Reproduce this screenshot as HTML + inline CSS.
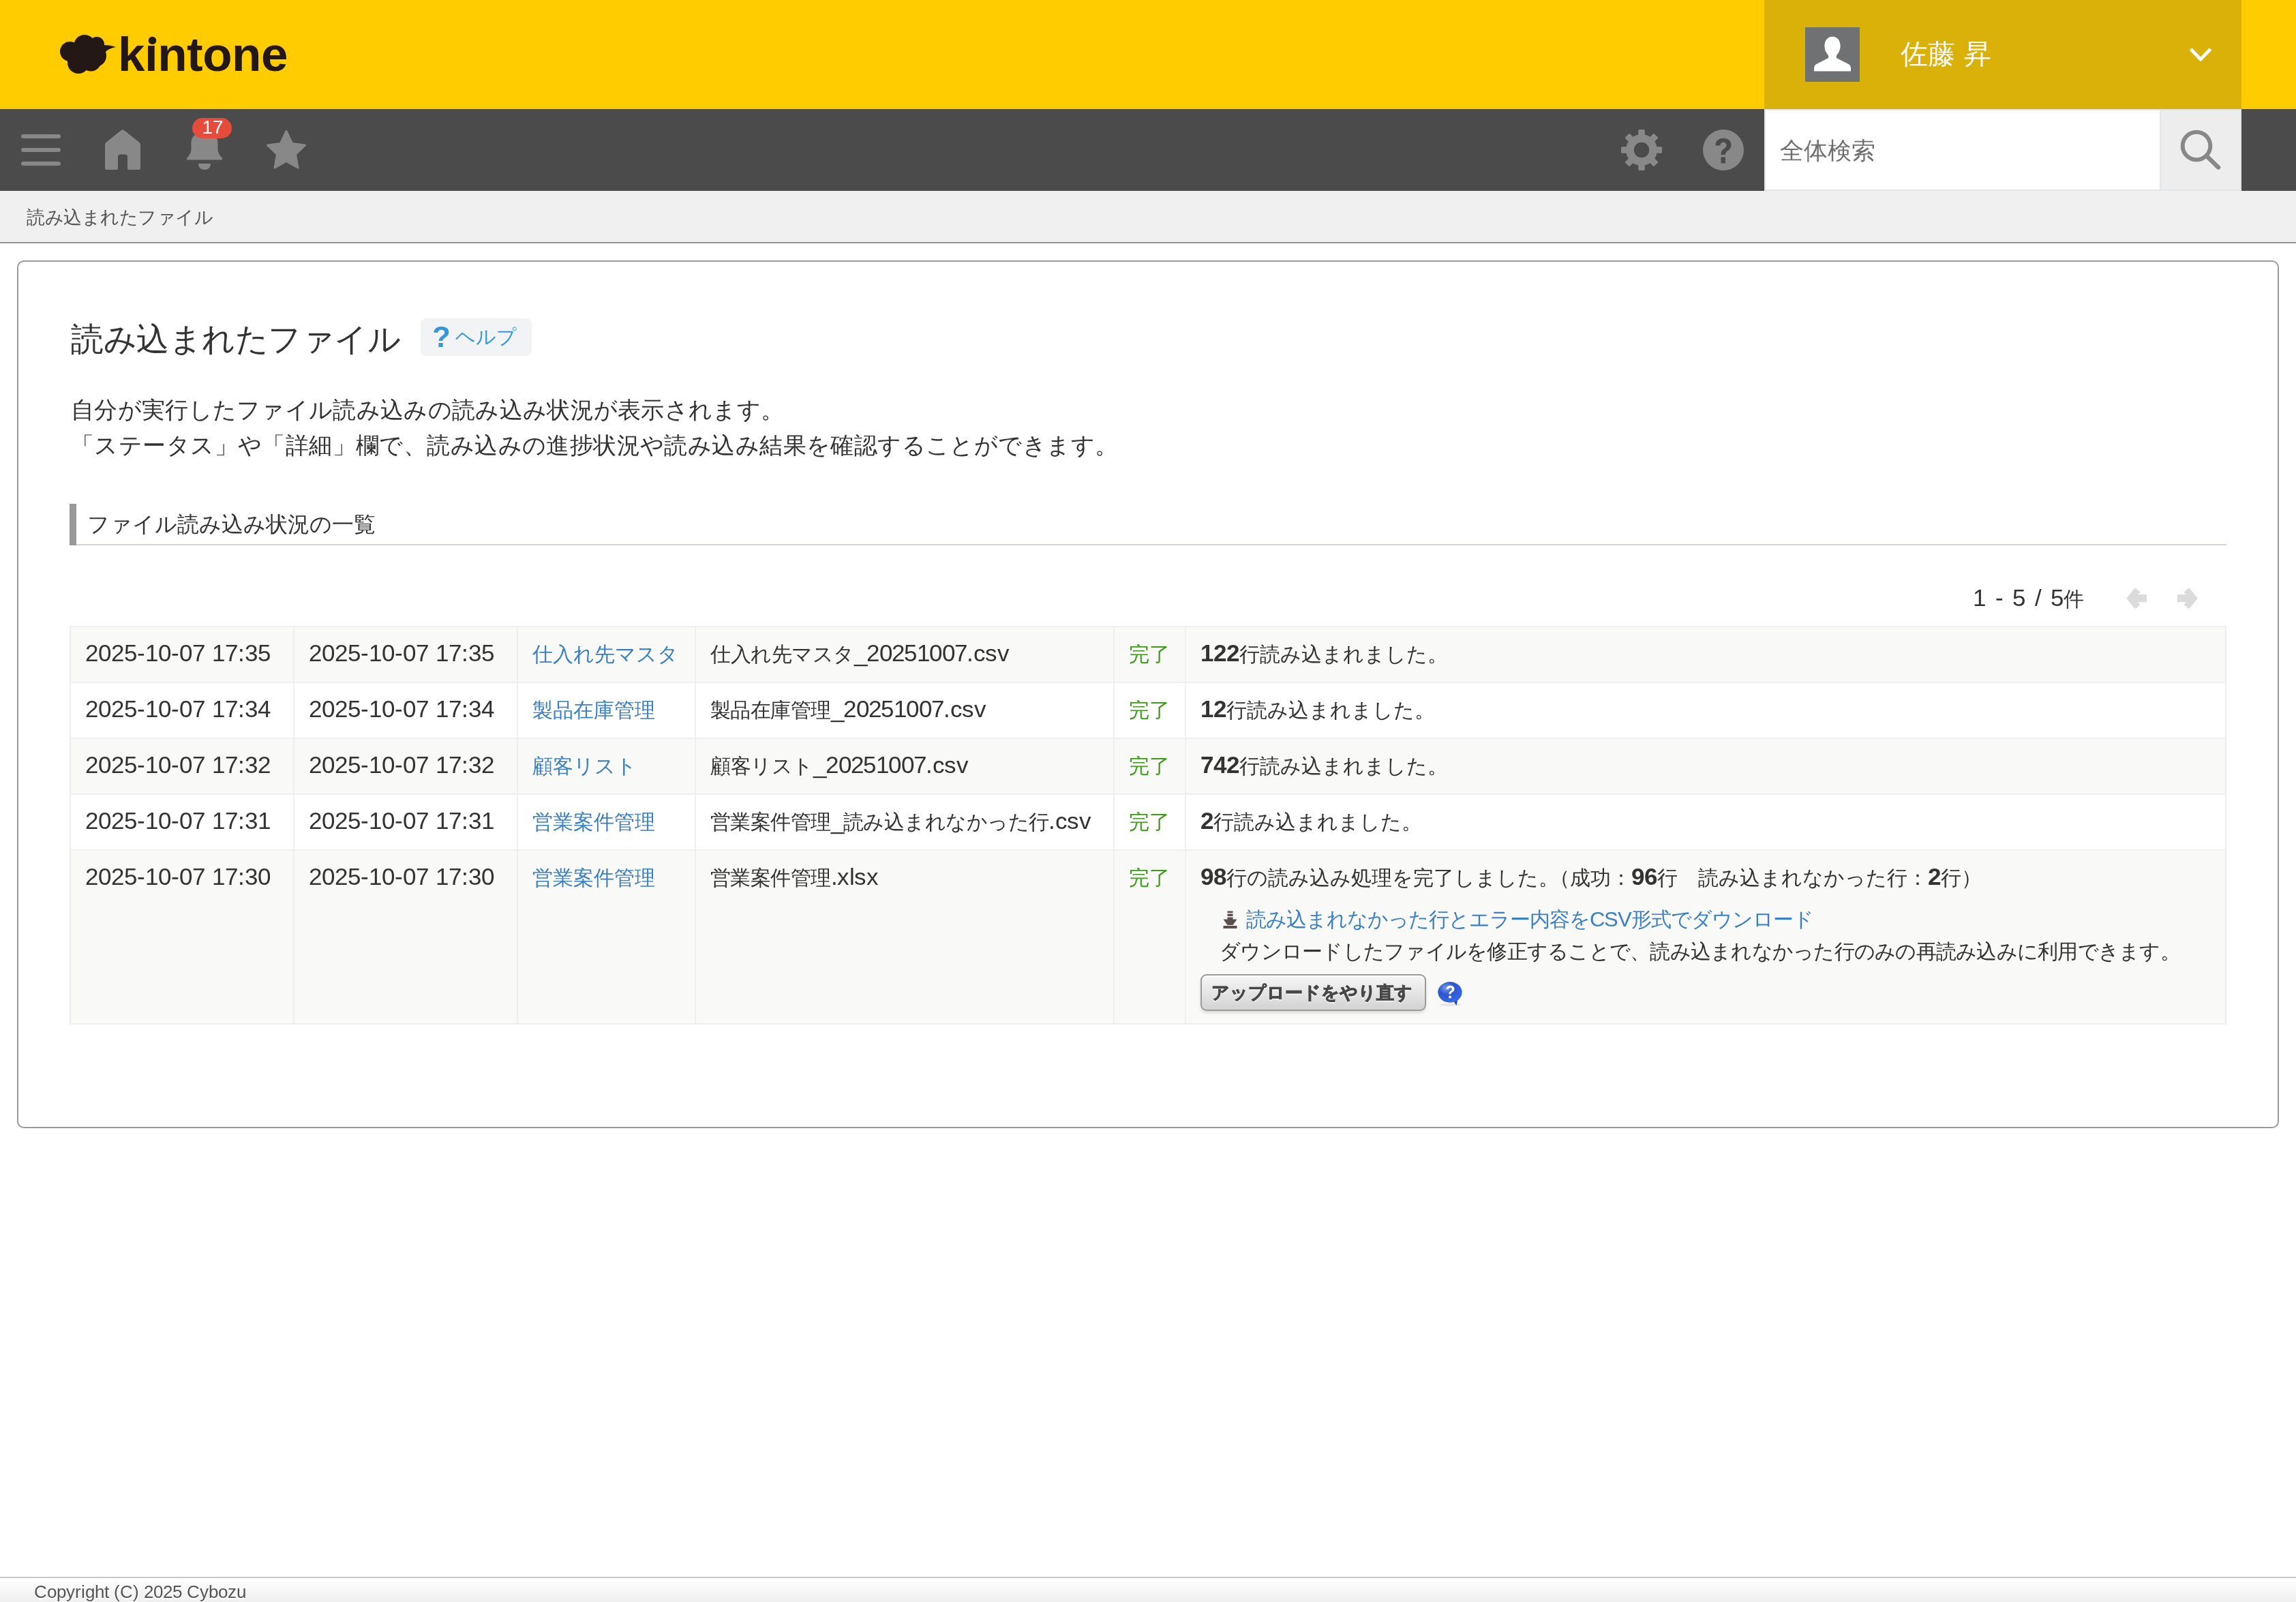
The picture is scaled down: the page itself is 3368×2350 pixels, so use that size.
<!DOCTYPE html>
<html lang="ja"><head><meta charset="utf-8"><title>読み込まれたファイル</title>
<style>
@font-face{font-family:"L";src:local("Liberation Sans"),local("LiberationSans");font-weight:400;size-adjust:118.5%;unicode-range:U+0020-007E,U+00A0-00FF}
@font-face{font-family:"L";src:local("Liberation Sans Bold"),local("LiberationSans-Bold");font-weight:700;size-adjust:118.5%;unicode-range:U+0020-007E,U+00A0-00FF}
*{box-sizing:border-box;margin:0;padding:0}
html,body{width:3368px;height:2350px;overflow:hidden;background:#fff}
body{position:relative;font-family:"L","Liberation Sans",sans-serif;color:#333}
.abs{position:absolute}
@media (max-width:2000px){html{zoom:0.5}}
#hdr{position:absolute;left:0;top:0;width:3368px;height:160px;background:#ffcc00}
#nav{position:absolute;left:0;top:160px;width:3368px;height:120px;background:#4b4b4b}
#user{position:absolute;left:2588px;top:0;width:700px;height:160px;background:#d9b108}
#crumb{position:absolute;left:0;top:280px;width:3368px;height:77px;background:#f0f0f0;border-bottom:2px solid #939393}
#box{position:absolute;left:25px;top:382px;width:3318px;height:1273px;border:2px solid #9a9a9a;border-radius:10px;background:#fff}
#foot{position:absolute;left:0;top:2313px;width:3368px;height:37px;border-top:2px solid #c9c9c9;background:linear-gradient(#fff,#efefef)}
.t{position:absolute;white-space:nowrap;line-height:1}
.j{white-space:nowrap;text-align:justify;text-align-last:justify}
span.j{display:inline-block}
table#list{position:absolute;left:102px;top:918px;width:3164px;border-collapse:separate;border-spacing:0;table-layout:fixed;border-left:2px solid #efefef;border-top:2px solid #efefef;font-size:29.5px;color:#333}
#list td{border-right:2px solid #efefef;border-bottom:2px solid #efefef;height:82px;padding:18px 0 0 21px;vertical-align:top;white-space:nowrap;line-height:40px;overflow:hidden}
#list tr.r5 td{height:255px}
.dl{margin:21px 0 0 30px;height:40px;position:relative}
.dl a{margin-left:37px;letter-spacing:-1px}
.d3{margin:7px 0 0 28px;height:40px;letter-spacing:-0.75px}
.btn{position:relative;margin-top:15px;height:54px}
.btn span{position:absolute;left:0;top:0;width:331px;height:54px;border:2px solid #9b9b9b;border-radius:9px;background:linear-gradient(#f7f7f7,#d3d3d3);box-shadow:0 3px 4px rgba(0,0,0,.12),inset 0 2px 0 #fff;font-size:26.3px;font-weight:bold;color:#474747;text-shadow:0 2px 0 #fff;line-height:47px;padding-left:14px;-webkit-text-stroke:0.9px #474747}
#list tr.g td{background:#f9f9f7}
#list a{color:#3b7fc4;text-decoration:none}
#list .ok{color:#3d9a1b}
#list td:nth-child(4){letter-spacing:-0.6px}
#list b{font-weight:bold}

.t,#list td,#foot{will-change:transform}
</style></head><body>
<div id="hdr">
  <svg class="abs" style="left:80px;top:44px" width="100" height="70" viewBox="0 0 100 70">
    <g fill="#231815">
      <circle cx="22.5" cy="31.5" r="14.5"/>
      <circle cx="44" cy="22.5" r="15.5"/>
      <circle cx="62" cy="21" r="11"/>
      <circle cx="60" cy="38" r="16"/>
      <circle cx="35" cy="48" r="16"/>
      <circle cx="53.5" cy="46" r="14.5"/>
      <rect x="24" y="25" width="36" height="30"/>
      <path d="M64 21.5 L70 22 C78 22 85 23 90 25.3 C83 26 78 29 74.7 32.3 L64 34 Z"/>
    </g>
  </svg>
  <div class="t" style="left:173px;top:44px;font-family:'Liberation Sans',sans-serif;font-size:71px;font-weight:bold;color:#231815;letter-spacing:-0.5px">kintone</div>
  <svg class="abs" style="left:210px;top:48px" width="24" height="20" viewBox="0 0 24 20"><rect x="5" y="3" width="13" height="10" fill="#ffcc00"/><circle cx="13.5" cy="11.4" r="5.7" fill="#231815"/></svg>
  <div id="user">
    <div class="abs" style="left:60px;top:40px;width:80px;height:80px;background:#707172">
      <svg width="80" height="80" viewBox="0 0 80 80"><path fill="#fff" d="M40 13.7 C47 13.7 51.6 19 51.6 27.5 C51.6 33 49.5 37 47 40 C45.6 41.7 45.3 43.5 46.3 45.2 L63 53.8 C66 55.5 67 57.5 67 60.5 L67 64.6 L13 64.6 L13 60.5 C13 57.5 14 55.5 17 53.8 L33.7 45.2 C34.7 43.5 34.4 41.7 33 40 C30.5 37 28.4 33 28.4 27.5 C28.4 19 33 13.7 40 13.7 Z"/></svg>
    </div>
    <div class="t j" style="width:133px;left:200px;top:57px;font-size:40px;color:#fff">佐藤 昇</div>
    <svg class="abs" style="left:624px;top:69px" width="33" height="23" viewBox="0 0 33 23"><path d="M1.5 3 L16 18 L30.5 3" fill="none" stroke="#fff" stroke-width="5"/></svg>
  </div>
</div>
<div id="nav">
  <div class="abs" style="left:31px;top:37px;width:58px;height:6px;border-radius:3px;background:#888"></div>
  <div class="abs" style="left:31px;top:57px;width:58px;height:6px;border-radius:3px;background:#888"></div>
  <div class="abs" style="left:31px;top:77px;width:58px;height:6px;border-radius:3px;background:#888"></div>
  <svg class="abs" style="left:150px;top:26px" width="60" height="68" viewBox="0 0 60 68">
    <path fill="#888" d="M30 4.5 Q31.5 4.5 33 5.8 L54 22.5 Q56 24 56 26.5 L56 60.5 Q56 63 53.5 63 L39 63 Q37 63 37 61 L37 44 Q37 40.5 33.5 40.5 L26.5 40.5 Q23 40.5 23 44 L23 61 Q23 63 21 63 L6.5 63 Q4 63 4 60.5 L4 26.5 Q4 24 6 22.5 L27 5.8 Q28.5 4.5 30 4.5 Z"/>
  </svg>
  <svg class="abs" style="left:270px;top:26px" width="60" height="68" viewBox="0 0 60 68">
    <path fill="#888" d="M30 8 C40 8 49.5 12 49.5 24 L49.5 33 C49.5 37 51 40 55 45 C57 47.5 56.5 48.5 54 48.5 L6 48.5 C3.5 48.5 3 47.5 5 45 C9 40 10.5 37 10.5 33 L10.5 24 C10.5 12 20 8 30 8 Z"/>
    <path fill="#888" d="M21 54 L39 54 C39 60 35 63 30 63 C25 63 21 60 21 54 Z"/>
  </svg>
  <div class="abs" style="left:282px;top:13px;width:58px;height:30px;border-radius:15px;background:#e64c3c"></div>
  <div class="t" style="left:283px;top:13px;width:58px;text-align:center;font-family:'Liberation Sans',sans-serif;font-size:28px;color:#fff">17</div>
  <svg class="abs" style="left:386px;top:26px" width="68" height="68" viewBox="0 0 68 68">
    <path fill="#888" stroke="#888" stroke-width="3" stroke-linejoin="round" d="M34 6.5 L42.5 24.5 L61.5 27 L47.5 40.5 L51 60 L34 50.5 L17 60 L20.5 40.5 L6.5 27 L25.5 24.5 Z"/>
  </svg>
  <svg class="abs" style="left:2374px;top:26px" width="68" height="68" viewBox="0 0 68 68" ><g fill="#888"><circle cx="34" cy="34" r="23"/><rect x="29.2" y="4" width="9.6" height="16" rx="1.5" transform="rotate(0 34 34)"/><rect x="29.2" y="4" width="9.6" height="16" rx="1.5" transform="rotate(45 34 34)"/><rect x="29.2" y="4" width="9.6" height="16" rx="1.5" transform="rotate(90 34 34)"/><rect x="29.2" y="4" width="9.6" height="16" rx="1.5" transform="rotate(135 34 34)"/><rect x="29.2" y="4" width="9.6" height="16" rx="1.5" transform="rotate(180 34 34)"/><rect x="29.2" y="4" width="9.6" height="16" rx="1.5" transform="rotate(225 34 34)"/><rect x="29.2" y="4" width="9.6" height="16" rx="1.5" transform="rotate(270 34 34)"/><rect x="29.2" y="4" width="9.6" height="16" rx="1.5" transform="rotate(315 34 34)"/></g><circle cx="34" cy="34" r="11.2" fill="#4b4b4b"/></svg>
  <svg class="abs" style="left:2494px;top:26px" width="68" height="68" viewBox="0 0 68 68">
    <circle cx="34" cy="34" r="30" fill="#888"/>
    <path fill="#4b4b4b" d="M22.5 27.5 C22.5 20 28 16.8 34 16.8 C40.5 16.8 45.5 20.5 45.5 26.5 C45.5 31 43 33.5 40 35.5 C37.5 37.2 37 38.5 37 41 L30.5 41 C30.5 37 31.5 34.5 35 32 C37.5 30.2 38.5 29 38.5 27 C38.5 24.5 36.5 22.8 34 22.8 C31 22.8 29.5 24.8 29.5 27.5 Z M30.5 44.5 L37 44.5 L37 53.5 L30.5 53.5 Z"/>
  </svg>
  <div class="abs" style="left:2588px;top:0;width:580px;height:120px;background:#fff;border:2px solid #e2e6e9;border-right:0"></div>
  <div class="t j" style="width:140px;left:2611px;top:41px;font-size:35px;color:#707070">全体検索</div>
  <div class="abs" style="left:3168px;top:0;width:120px;height:120px;background:#ededed;border:2px solid #e2e6e9"></div>
  <svg class="abs" style="left:3190px;top:22px" width="76" height="76" viewBox="0 0 76 76">
    <circle cx="32" cy="32" r="20.3" fill="none" stroke="#888" stroke-width="6"/>
    <path d="M46.5 46.5 L64 63.5" stroke="#888" stroke-width="6.5" stroke-linecap="round"/>
  </svg>
</div>
<div id="crumb"><div class="t j" style="width:273px;left:39px;top:25px;font-size:26.5px;color:#555;letter-spacing:-0.6px">読み込まれたファイル</div></div>
<div id="box"></div>
<div class="t j" style="width:483px;left:104px;top:471px;font-size:47.5px;color:#333;letter-spacing:-0.55px">読み込まれたファイル</div>
<div class="abs" style="left:617px;top:467px;width:163px;height:55px;border-radius:8px;background:#f1f3f5"></div>
<div class="t" style="left:634px;top:475px;font-size:37px;color:#3498db;font-weight:bold">?</div><div class="t j" style="width:89px;left:668px;top:478px;font-size:28.5px;color:#3498db;letter-spacing:-0.6px">ヘルプ</div>
<div class="t j" style="width:1046px;left:104px;top:573px;font-size:34.35px;line-height:52px;color:#333">自分が実行したファイル読み込みの読み込み状況が表示されます。</div>
<div class="t j" style="width:1536px;left:104px;top:625px;font-size:34.35px;line-height:52px;color:#333">「ステータス」や「詳細」欄で、読み込みの進捗状況や読み込み結果を確認することができます。</div>
<div class="abs" style="left:102px;top:739px;width:10px;height:61px;background:#999"></div>
<div class="abs" style="left:112px;top:798px;width:3154px;height:2px;background:#d6d3ce"></div>
<div class="t j" style="width:423px;left:128px;top:752px;font-size:31.8px;color:#333">ファイル読み込み状況の一覧</div>
<div class="t" style="left:2894px;top:862px;font-size:29.5px;color:#333;word-spacing:3.5px">1 - 5 / 5件</div>
<svg class="abs" style="left:3115px;top:860px" width="38" height="36" viewBox="0 0 38 36"><path fill="#dcdbdb" d="M4.3 17.75 L15.8 3.6 Q17 2.4 18.4 3.2 L23.9 8.3 Q24.6 9.1 23.8 9.8 L20.3 12.1 L33.9 12.1 L33.9 23.3 L20.3 23.3 L23.8 25.7 Q24.6 26.4 23.9 27.2 L18.4 32.3 Q17 33.1 15.8 31.9 Z"/></svg>
<svg class="abs" style="left:3190px;top:860px" width="38" height="36" viewBox="0 0 38 36"><path fill="#dcdbdb" transform="translate(38 0) scale(-1 1)" d="M4.3 17.75 L15.8 3.6 Q17 2.4 18.4 3.2 L23.9 8.3 Q24.6 9.1 23.8 9.8 L20.3 12.1 L33.9 12.1 L33.9 23.3 L20.3 23.3 L23.8 25.7 Q24.6 26.4 23.9 27.2 L18.4 32.3 Q17 33.1 15.8 31.9 Z"/></svg>
<table id="list">
<colgroup><col style="width:328px"><col style="width:328px"><col style="width:261px"><col style="width:614px"><col style="width:105px"><col style="width:1526px"></colgroup>
<tr class="g"><td>2025-10-07 17:35</td><td>2025-10-07 17:35</td><td><a class="j" style="width:214px;display:inline-block">仕入れ先マスタ</a></td><td><span class="j" style="width:438px">仕入れ先マスタ_20251007.csv</span></td><td class="ok"><span class="j" style="width:60px">完了</span></td><td><span class="j" style="width:363px"><b>122</b>行読み込まれました。</span></td></tr>
<tr><td>2025-10-07 17:34</td><td>2025-10-07 17:34</td><td><a class="j" style="width:180px;display:inline-block">製品在庫管理</a></td><td><span class="j" style="width:404px">製品在庫管理_20251007.csv</span></td><td class="ok"><span class="j" style="width:60px">完了</span></td><td><span class="j" style="width:344px"><b>12</b>行読み込まれました。</span></td></tr>
<tr class="g"><td>2025-10-07 17:32</td><td>2025-10-07 17:32</td><td><a class="j" style="width:153px;display:inline-block">顧客リスト</a></td><td><span class="j" style="width:378px">顧客リスト_20251007.csv</span></td><td class="ok"><span class="j" style="width:60px">完了</span></td><td><span class="j" style="width:363px"><b>742</b>行読み込まれました。</span></td></tr>
<tr><td>2025-10-07 17:31</td><td>2025-10-07 17:31</td><td><a class="j" style="width:180px;display:inline-block">営業案件管理</a></td><td><span class="j" style="width:558px">営業案件管理_読み込まれなかった行.csv</span></td><td class="ok"><span class="j" style="width:60px">完了</span></td><td><span class="j" style="width:325px"><b>2</b>行読み込まれました。</span></td></tr>
<tr class="g r5"><td>2025-10-07 17:30</td><td>2025-10-07 17:30</td><td><a class="j" style="width:180px;display:inline-block">営業案件管理</a></td><td><span class="j" style="width:246px">営業案件管理.xlsx</span></td><td class="ok"><span class="j" style="width:60px">完了</span></td><td><div><span class="j" style="width:1146px"><b>98</b>行の読み込み処理を完了しました<span style="letter-spacing:-14px">。</span>（成功：<b>96</b>行　読み込まれなかった行：<b>2</b>行）</span></div>
<div class="dl"><svg class="abs" style="left:3px;top:8px" width="22" height="28" viewBox="0 0 22 28"><g fill="#5b4f4f"><rect x="6.5" y="1.5" width="8" height="2.6"/><rect x="6.5" y="5.5" width="8" height="3.5"/><path d="M6.5 10.5 L14.5 10.5 L14.5 13.5 L20.5 13.5 L14.5 22 L6.5 22 L0.5 13.5 L6.5 13.5 Z"/><rect x="0.5" y="23" width="20" height="4"/></g></svg><a class="j" style="width:832px;display:inline-block">読み込まれなかった行とエラー内容を<span style="font-size:26.5px">CSV</span>形式でダウンロード</a></div>
<div class="d3"><span class="j" style="width:1409px">ダウンロードしたファイルを修正することで、読み込まれなかった行のみの再読み込みに利用できます。</span></div>
<div class="btn"><span><i class="j" style="width:295px;display:inline-block;font-style:normal">アップロードをやり直す</i></span><svg class="abs" style="left:346px;top:8px" width="40" height="40" viewBox="0 0 40 40"><defs><radialGradient id="bg1" cx="35%" cy="30%" r="70%"><stop offset="0" stop-color="#7d9cf0"/><stop offset=".45" stop-color="#2f56cc"/><stop offset="1" stop-color="#3567e8"/></radialGradient></defs><ellipse cx="20" cy="37" rx="16" ry="2.2" fill="rgba(0,0,0,.07)"/><path d="M24 30 L29.5 38 L31.5 28 Z" fill="#2d3fa8"/><ellipse cx="20" cy="18.5" rx="17.7" ry="15.2" fill="url(#bg1)"/><path fill="#fff" transform="translate(0 2.3)" d="M14.5 11.5 C15 8 17.5 6.5 20.5 6.5 C24 6.5 26.5 8.5 26.5 11.5 C26.5 14 25 15.2 23.2 16.3 C22 17 21.6 17.6 21.6 19 L18.4 19 C18.4 16.6 19 15.6 20.8 14.5 C22.2 13.6 22.8 12.8 22.8 11.8 C22.8 10.5 21.8 9.6 20.3 9.6 C18.6 9.6 17.9 10.6 17.7 12 Z M18.3 21.5 L21.7 21.5 L21.7 25 L18.3 25 Z"/></svg></div></td></tr>
</table>
<div id="foot"><div class="t" style="left:50px;top:10px;font-size:21.6px;color:#555;text-shadow:0 2px 0 #fff">Copyright (C) 2025 Cybozu</div></div>
</body></html>
